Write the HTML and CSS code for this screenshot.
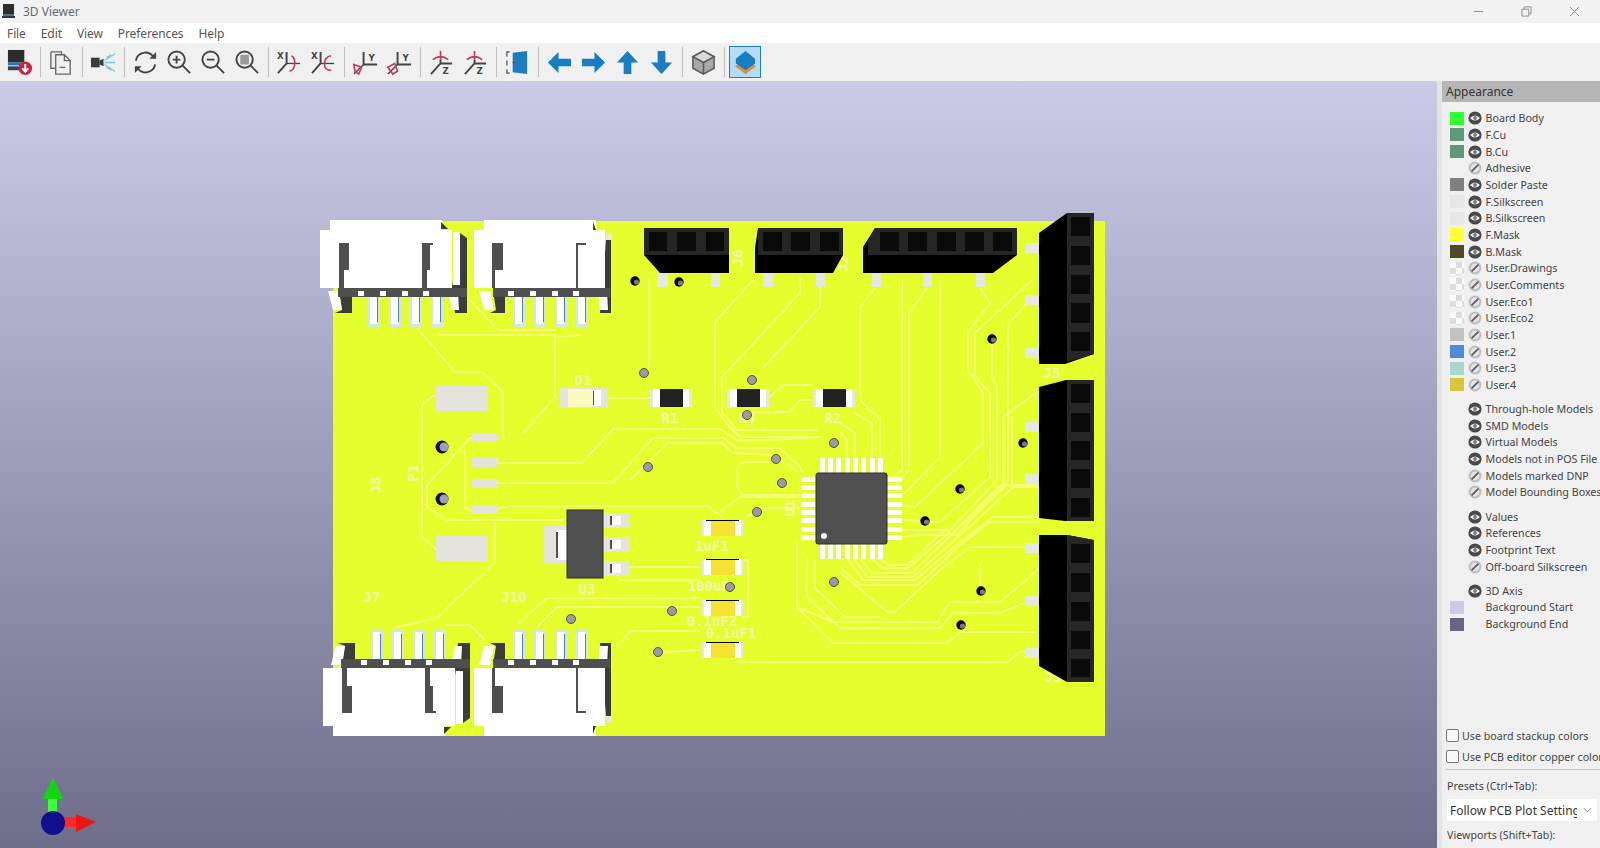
FILE: index.html
```html
<!DOCTYPE html>
<html lang="en">
<head>
<meta charset="utf-8">
<title>3D Viewer</title>
<link rel="stylesheet" href="styles.css">
</head>
<body>
<svg class="sprites" width="0" height="0" aria-hidden="true">
  <defs>
    <symbol id="eye" viewBox="0 0 14 14"><circle cx="7" cy="7" r="6.6" fill="#4a4a4a"/><path d="M2 7q5-5 10 0q-5 5-10 0z" fill="#f2f2f2"/><circle cx="7" cy="7" r="1.9" fill="#777"/></symbol>
    <symbol id="off" viewBox="0 0 14 14"><circle cx="7" cy="7" r="6.4" fill="#bdbdbd"/><circle cx="7" cy="7" r="4.4" fill="#e4e4e4"/><path d="M3.6 10.4L10.4 3.6" stroke="#5a5a5a" stroke-width="1.7"/></symbol>
  </defs>
</svg>

<header class="titlebar">
  <svg class="appicon" viewBox="0 0 14 16"><rect x="1" y="0" width="11" height="10" fill="#2d2d2d"/><rect x="1" y="10" width="11" height="2" fill="#5a6f86"/><rect x="0" y="12" width="13" height="2" fill="#2a3a4c"/></svg>
  <span class="title">3D Viewer</span>
  <div class="winctl">
    <svg viewBox="0 0 12 12"><path d="M1 6h10" class="ctl"/></svg>
    <svg viewBox="0 0 12 12"><path d="M1 3.5h7.5v7.5h-7.5zM3.5 3.5v-2.5h7.5v7.5h-2.5" class="ctl"/></svg>
    <svg viewBox="0 0 12 12"><path d="M1 1l10 10M11 1l-10 10" class="ctl"/></svg>
  </div>
</header>

<nav class="menubar"><span>File</span><span>Edit</span><span>View</span><span>Preferences</span><span>Help</span></nav>

<div class="toolbar">
  <span class="tool"><svg viewBox="0 0 28 28"><rect x="2" y="1" width="17" height="13" fill="#2c2c2c"/><rect x="2" y="14" width="17" height="3" fill="#1f79b8"/><rect x="2" y="18" width="17" height="4" fill="#33414f"/><circle cx="20" cy="20" r="7" fill="#c8213f"/><path d="M20 15.500v8M16.800 20l3.200 3.600l3.200-3.600" class="wline"/></svg></span>
  <i class="sep"></i>
  <span class="tool"><svg viewBox="0 0 28 28"><path d="M3 3h11v3M8 6h9l6 6v14h-15zM3 3v17h5M17 6v6h6M12 19h6" class="gline"/></svg></span>
  <i class="sep"></i>
  <span class="tool"><svg viewBox="0 0 28 28"><rect x="1" y="9" width="9" height="10" fill="#3b3b3b"/><path d="M10 12l4-2v8l-4-2z" fill="#3b3b3b"/><path d="M15 12l11-7M15 14h11M15 16l11 7M17 9l5-3M17 19l5 3" class="bline"/></svg></span>
  <i class="sep"></i>
  <span class="tool"><svg viewBox="0 0 28 28"><path d="M4 12a10 10 0 0 1 18-4M24 16a10 10 0 0 1-18 4" class="dline"/><path d="M25 3v7h-7zM3 25v-7h7z" fill="#444"/></svg></span>
  <span class="tool"><svg viewBox="0 0 28 28"><circle cx="11" cy="11" r="8.500" class="dline"/><path d="M17 17l8 8M7 11h8M11 7v8" class="dline"/></svg></span>
  <span class="tool"><svg viewBox="0 0 28 28"><circle cx="11" cy="11" r="8.500" class="dline"/><path d="M17 17l8 8M7 11h8" class="dline"/></svg></span>
  <span class="tool"><svg viewBox="0 0 28 28"><circle cx="11" cy="11" r="8.500" class="dline"/><path d="M17 17l8 8" class="dline"/><rect x="6.500" y="6" width="9" height="10" rx="1" fill="#9a9a9a"/></svg></span>
  <i class="sep"></i>
  <span class="tool"><svg viewBox="0 0 28 28"><path d="M11 3v12L2 25" class="dline"/><path d="M11 15l14 0" class="dline thin"/><path d="M16 7q5 3 3 11q-1 4-5 5" class="rline"/><text x="1" y="10" class="axis">X</text></svg></span>
  <span class="tool"><svg viewBox="0 0 28 28"><path d="M11 3v12L2 25" class="dline"/><path d="M11 15l14 0" class="dline thin"/><path d="M22 7q-7 1-7 9q0 6 7 6" class="rline"/><text x="1" y="10" class="axis">X</text></svg></span>
  <i class="sep"></i>
  <span class="tool"><svg viewBox="0 0 28 28"><path d="M12 3v13h14" class="dline"/><path d="M12 16L2 26" class="dline thin"/><path d="M2 16l8 3l-3 7l-4-3z" class="rline"/><text x="17" y="12" class="axis">Y</text></svg></span>
  <span class="tool"><svg viewBox="0 0 28 28"><path d="M12 3v13h14" class="dline"/><path d="M12 16L2 26" class="dline thin"/><path d="M9 15l-7 4l5 7l5-3z" class="rline"/><text x="17" y="12" class="axis">Y</text></svg></span>
  <i class="sep"></i>
  <span class="tool"><svg viewBox="0 0 28 28"><path d="M13 11v4H25M13 15L3 26" class="dline"/><path d="M13 2v9M5 11q8-6 16 0" class="rline"/><text x="15" y="26" class="axis">Z</text></svg></span>
  <span class="tool"><svg viewBox="0 0 28 28"><path d="M13 11v4H25M13 15L3 26" class="dline"/><path d="M13 2v9M21 11q-8-6-16 0" class="rline"/><text x="15" y="26" class="axis">Z</text></svg></span>
  <i class="sep"></i>
  <span class="tool"><svg viewBox="0 0 28 28"><path d="M9 4l15-2v24l-15-2z" fill="#1a7dc2"/><path d="M6 3h-3v5M3 12v5M3 21v4h3M9 14h3" class="dash"/></svg></span>
  <i class="sep"></i>
  <span class="tool"><svg viewBox="0 0 28 28"><path d="M2 14L13 3v7h13v8H13v7z" class="blue"/></svg></span>
  <span class="tool"><svg viewBox="0 0 28 28"><path d="M26 14L15 3v7H2v8h13v7z" class="blue"/></svg></span>
  <span class="tool"><svg viewBox="0 0 28 28"><path d="M14 2L3 14h7v12h8V14h7z" class="blue"/></svg></span>
  <span class="tool"><svg viewBox="0 0 28 28"><path d="M14 26L3 14h7V2h8v12h7z" class="blue"/></svg></span>
  <i class="sep"></i>
  <span class="tool"><svg viewBox="0 0 28 28"><path d="M14 2l11 6v12l-11 6l-11-6V8z" fill="#a9a9a9" stroke="#5a5a5a" stroke-width="1.600"/><path d="M14 2l11 6l-11 6l-11-6z" fill="#d8d8d8" stroke="#5a5a5a" stroke-width="1.600"/><path d="M14 14v12" stroke="#5a5a5a" stroke-width="1.600"/></svg></span>
  <i class="sep"></i>
  <span class="tool active"><svg viewBox="0 0 28 28"><path d="M14 11l11 7l-11 8l-11-8z" fill="#d8923a"/><path d="M14 2l10 8v5l-10 7l-10-7v-5z" fill="#1a7dc2"/></svg></span>
</div>

<main class="main">
  <div class="viewport">
    <svg class="scene" width="1437" height="767" viewBox="0 81 1437 767">
      <defs>
        <g id="pin"><rect x="0" y="297" width="12" height="30" class="pinframe"/><rect x="2" y="297" width="7" height="27" class="wh"/><rect x="9" y="297" width="1" height="25" class="pinedge"/></g>
        <g id="conA">
          <path d="M339 291L352 297V313H335L342 310z" class="sh"/>
          <path d="M460 233L467 238V313H455L452 287z" class="sh"/>
          <path d="M328 291H339L342 310H333z" class="wh"/>
          <path d="M448 291H458L459 310H452z" class="wh"/>
          <use href="#pin" x="368"/><use href="#pin" x="389"/><use href="#pin" x="410"/><use href="#pin" x="431"/>
          <rect x="338" y="288" width="129" height="9" class="dk"/>
          <rect x="358" y="291" width="6" height="5" class="wh"/><rect x="380" y="291" width="6" height="5" class="wh"/><rect x="402" y="291" width="6" height="5" class="wh"/><rect x="423" y="291" width="6" height="5" class="wh"/>
          <rect x="320" y="230" width="132" height="58" class="wh"/>
          <rect x="330" y="220" width="112" height="10" class="wh"/>
          <path d="M441 222L448 229H441z" class="sh"/>
          <rect x="453" y="232" width="7" height="53" class="wh"/>
          <path d="M339 243H349V270H344V288H339z" class="dk"/>
          <path d="M422 243H433V245H430V270H427V288H422z" class="dk"/>
        </g>
        <g id="conB">
          <use href="#pin" x="513"/><use href="#pin" x="534"/><use href="#pin" x="555"/><use href="#pin" x="576"/>
          <path d="M607 233H612V313H600L598 288z" class="pale"/>
          <path d="M606 240H611V313H600z" class="sh"/>
          <path d="M493 291L505 297V313H490L496 310z" class="sh"/>
          <path d="M479 291H490L494 310H484z" class="wh"/>
          <path d="M598 291H607L608 310H600z" class="wh"/>
          <rect x="493" y="288" width="117" height="9" class="dk"/>
          <rect x="508" y="291" width="6" height="5" class="wh"/><rect x="530" y="291" width="6" height="5" class="wh"/><rect x="552" y="291" width="6" height="5" class="wh"/><rect x="573" y="291" width="6" height="5" class="wh"/>
          <rect x="474" y="230" width="131" height="58" class="wh"/>
          <rect x="484" y="220" width="112" height="10" class="wh"/>
          <path d="M593 222L596 230H593z" class="sh"/>
          <path d="M492 243H503V270H495V288H492z" class="dk"/>
          <path d="M576 243H586V245H578V288H576z" class="dk"/>
        </g>
        <g id="smd"><rect x="0" y="0" width="41" height="16" class="wh"/><rect x="0" y="0" width="2" height="16" class="pale"/><rect x="39" y="0" width="2" height="16" class="pale"/><rect x="9" y="0" width="24" height="16" class="cap"/><rect x="4" y="0" width="33" height="1" class="blk"/></g>
        <g id="res"><rect x="0" y="0" width="42" height="18" class="wh"/><rect x="0" y="0" width="3" height="18" class="pale"/><rect x="39" y="0" width="3" height="18" class="pale"/><rect x="10" y="0" width="23" height="18" class="ink"/></g>
        <circle id="via" r="4.500"/>
        <g id="viad"><circle r="4.700" class="blk"/><circle cx="1.500" cy="1" r="2.600" class="viaglint"/></g>
      </defs>

      <rect x="333" y="221" width="772" height="515" class="board"/>

      <g class="tr">
        <path d="M649 278V367"/>
        <path d="M417 328L455 372H482L503 392V440"/>
        <path d="M437 335H555V397L523 433"/>
        <path d="M470 300L498 330H555M580 335L557 337"/>
        <path d="M608 398H650"/>
        <path d="M497 463H582L613 429H720L737 440H770L820 437"/>
        <path d="M497 483H613L653 438H723L737 448H780L800 467L803 473"/>
        <path d="M630 480L668 443H722L733 453L773 455L797 472"/>
        <path d="M497 509L510 506H707L722 517"/>
        <path d="M472 438H470L427 485V507L447 520H563"/>
        <path d="M465 450V508L472 510"/>
        <path d="M422 430V537L437 550"/>
        <path d="M422 430V405L433 396H436"/>
        <path d="M495 522V562L437 618L397 627"/>
        <path d="M445 625H470L485 640"/>
        <path d="M519 623L547 598H700"/>
        <path d="M537 627L557 607H700"/>
        <path d="M617 647L630 631H700"/>
        <path d="M627 567H700M618 580H700M663 652L700 650"/>
        <path d="M753 280L715 322V408L728 425L740 437H820"/>
        <path d="M800 278V293L722 377V412L737 430H817"/>
        <path d="M820 287V307L763 368"/>
        <path d="M770 397L783 385H813"/>
        <path d="M750 412H790L800 400H813"/>
        <path d="M743 462L737 468V487L743 495H800"/>
        <path d="M743 462H770"/>
        <path d="M720 512L740 497H800"/>
        <path d="M747 517L760 508H800"/>
        <path d="M742 560H748V617H743"/>

        <path d="M875 288L860 307V400L880 420V457"/>
        <path d="M853 412L872 423V457"/>
        <path d="M840 423L855 433V457"/>
        <path d="M840 432L847 440V457"/>
        <path d="M902 280V470L890 480"/>
        <path d="M927 288L909 313V470L895 487"/>
        <path d="M940 280V457L908 490L898 497"/>
        <path d="M980 288L990 303L968 332V370L983 393V443L915 507L900 505"/>
        <path d="M1032 280L975 333V377L990 393V477L940 522L903 520"/>
        <path d="M992 345V377L997 387V480L950 530H902"/>
        <path d="M1025 305L1008 325V480L957 535H920L903 537"/>
        <path d="M1037 392L1003 417V483L953 533"/>
        <path d="M1012 417V490"/>

        <path d="M860 558L872 573H912L953 533L1007 485H1038"/>
        <path d="M853 558L868 577H913L957 538L1013 487H1040"/>
        <path d="M847 558L863 580H915L960 542L993 517H1037"/>
        <path d="M878 558L890 565H907L947 528"/>
        <path d="M870 558L883 568H908L950 532"/>
        <path d="M840 567L860 585H918L960 545L990 522H1040"/>
        <path d="M840 572L887 612H895L940 570L970 547H1027"/>
        <path d="M980 563V587"/>
        <path d="M797 543V607L833 622H937L950 602H1000L1040 568"/>
        <path d="M807 557V597L840 628H940L953 613H1000L1037 597"/>
        <path d="M815 560V588L845 617H880"/>
        <path d="M797 607L833 643H947L960 632H1037"/>
        <path d="M733 662H1007L1020 652H1037"/>
      </g>

      <g class="silk">
        <text transform="translate(743 258) rotate(-90)" text-anchor="middle">J6</text>
        <text transform="translate(848 264) rotate(-90)" text-anchor="middle">J2</text>
        <text x="1052" y="378" text-anchor="middle">J5</text>
        <text x="1053" y="682" text-anchor="middle">J3</text>
      </g>

      <use href="#conA"/>
      <use href="#conB"/>
      <use href="#conA" transform="matrix(1 0 0 -1 3 956)"/>
      <use href="#conB" transform="matrix(1 0 0 -1 0 956)"/>

      <g class="pale">
        <rect x="711" y="273" width="9" height="14"/><rect x="657" y="273" width="11" height="14"/>
        <rect x="763" y="273" width="10" height="14"/><rect x="816" y="273" width="9" height="14"/>
        <rect x="872" y="273" width="9" height="14"/><rect x="923" y="273" width="9" height="14"/><rect x="976" y="273" width="9" height="14"/>
        <rect x="1025" y="243" width="14" height="10"/><rect x="1025" y="295" width="14" height="10"/><rect x="1025" y="348" width="14" height="10"/>
        <rect x="1025" y="422" width="14" height="10"/><rect x="1025" y="474" width="14" height="10"/>
        <rect x="1025" y="543" width="14" height="10"/><rect x="1025" y="596" width="14" height="10"/><rect x="1025" y="648" width="14" height="10"/>
      </g>

      <path d="M644 228H729V273H660L644 255z" class="blk"/>
      <rect x="644" y="228" width="85" height="27" class="hdr"/>
      <rect x="649" y="232" width="18" height="19" class="sq"/><rect x="677" y="232" width="19" height="19" class="sq"/><rect x="706" y="232" width="18" height="19" class="sq"/>

      <path d="M758 228H843V255L833 273H755V248z" class="blk"/>
      <rect x="758" y="228" width="85" height="27" class="hdr"/>
      <rect x="763" y="232" width="19" height="19" class="sq"/><rect x="791" y="232" width="19" height="19" class="sq"/><rect x="820" y="232" width="19" height="19" class="sq"/>

      <path d="M875 228H1017V255L993 273H863V247z" class="blk"/>
      <path d="M875 228H1017V255H868V240z" class="hdr"/>
      <rect x="880" y="232" width="19" height="19" class="sq"/><rect x="908" y="232" width="19" height="19" class="sq"/><rect x="937" y="232" width="19" height="19" class="sq"/><rect x="965" y="232" width="19" height="19" class="sq"/><rect x="993" y="232" width="19" height="19" class="sq"/>

      <path d="M1039 233L1067 213H1094V354L1065 364H1039z" class="blk"/>
      <path d="M1067 213H1094V354L1067 362z" class="hdr"/>
      <rect x="1071" y="217" width="19" height="19" class="sq"/><rect x="1071" y="246" width="19" height="19" class="sq"/><rect x="1071" y="275" width="19" height="19" class="sq"/><rect x="1071" y="303" width="19" height="20" class="sq"/><rect x="1071" y="332" width="19" height="19" class="sq"/>

      <path d="M1039 387L1066 380H1094V521H1065L1039 518z" class="blk"/>
      <rect x="1067" y="380" width="27" height="141" class="hdr"/>
      <rect x="1071" y="384" width="19" height="19" class="sq"/><rect x="1071" y="413" width="19" height="19" class="sq"/><rect x="1071" y="441" width="19" height="19" class="sq"/><rect x="1071" y="469" width="19" height="19" class="sq"/><rect x="1071" y="498" width="19" height="19" class="sq"/>

      <path d="M1039 535H1067L1094 540V682H1067L1039 666z" class="blk"/>
      <path d="M1067 535L1094 540V682H1067z" class="hdr"/>
      <rect x="1071" y="544" width="19" height="19" class="sq"/><rect x="1071" y="573" width="19" height="19" class="sq"/><rect x="1071" y="602" width="19" height="19" class="sq"/><rect x="1071" y="631" width="19" height="18" class="sq"/><rect x="1071" y="659" width="19" height="18" class="sq"/>

      <rect x="436" y="386" width="52" height="25" class="silkpad"/>
      <rect x="436" y="536" width="52" height="25" class="silkpad"/>
      <rect x="472" y="433" width="25" height="9" class="silkpad"/><rect x="472" y="458" width="25" height="9" class="silkpad"/><rect x="472" y="479" width="25" height="9" class="silkpad"/><rect x="472" y="505" width="25" height="9" class="silkpad"/>

      <rect x="560" y="388" width="48" height="20" class="silkpad"/>
      <rect x="568" y="389" width="25" height="18" class="led"/>
      <rect x="593" y="390" width="8" height="16" class="wh"/>
      <rect x="593" y="391" width="1" height="14" class="dk"/>
      <use href="#res" x="650" y="389"/>
      <use href="#res" x="727" y="389"/>
      <use href="#res" x="813" y="389"/>

      <rect x="544" y="525" width="23" height="38" class="silkpad"/>
      <rect x="557" y="530" width="10" height="30" class="wh"/>
      <rect x="556" y="532" width="2" height="26" class="dk"/>
      <rect x="603" y="513" width="26" height="15" class="silkpad"/><rect x="603" y="537" width="26" height="15" class="silkpad"/><rect x="603" y="561" width="26" height="15" class="silkpad"/>
      <rect x="610" y="516" width="11" height="9" class="wh"/><rect x="610" y="540" width="11" height="9" class="wh"/><rect x="610" y="564" width="11" height="9" class="wh"/>
      <rect x="610" y="516" width="2" height="9" class="dk"/><rect x="610" y="540" width="2" height="9" class="dk"/><rect x="610" y="564" width="2" height="9" class="dk"/>
      <rect x="567" y="510" width="36" height="68" class="ic"/>

      <use href="#smd" x="702" y="520"/>
      <use href="#smd" x="702" y="559"/>
      <use href="#smd" x="702" y="600"/>
      <use href="#smd" x="702" y="642"/>

      <g class="wh">
        <rect x="820" y="458" width="5" height="15"/><rect x="828" y="458" width="5" height="15"/><rect x="836" y="458" width="5" height="15"/><rect x="845" y="458" width="5" height="15"/><rect x="853" y="458" width="5" height="15"/><rect x="861" y="458" width="5" height="15"/><rect x="870" y="458" width="5" height="15"/><rect x="878" y="458" width="5" height="15"/>
        <rect x="820" y="544" width="5" height="15"/><rect x="828" y="544" width="5" height="15"/><rect x="836" y="544" width="5" height="15"/><rect x="845" y="544" width="5" height="15"/><rect x="853" y="544" width="5" height="15"/><rect x="861" y="544" width="5" height="15"/><rect x="870" y="544" width="5" height="15"/><rect x="878" y="544" width="5" height="15"/>
        <rect x="801" y="477" width="15" height="5"/><rect x="801" y="485" width="15" height="5"/><rect x="801" y="493" width="15" height="5"/><rect x="801" y="502" width="15" height="5"/><rect x="801" y="510" width="15" height="5"/><rect x="801" y="518" width="15" height="5"/><rect x="801" y="527" width="15" height="5"/><rect x="801" y="535" width="15" height="5"/>
        <rect x="887" y="477" width="15" height="5"/><rect x="887" y="485" width="15" height="5"/><rect x="887" y="493" width="15" height="5"/><rect x="887" y="502" width="15" height="5"/><rect x="887" y="510" width="15" height="5"/><rect x="887" y="518" width="15" height="5"/><rect x="887" y="527" width="15" height="5"/><rect x="887" y="535" width="15" height="5"/>
      </g>
      <rect x="816" y="473" width="71" height="71" rx="2" class="ic"/>
      <circle cx="824" cy="536" r="3" class="wh"/>

      <g class="hole"><circle cx="442" cy="447" r="6.500"/><circle cx="442" cy="499" r="6.500"/></g>
      <g class="holefill"><circle cx="444" cy="447" r="4.500"/><circle cx="444" cy="499" r="4.500"/></g>

      <g class="silk">
        <text x="583" y="385" text-anchor="middle">D1</text>
        <text x="670" y="423" text-anchor="middle">R1</text>
        <text x="747" y="423" text-anchor="middle">R3</text>
        <text x="833" y="423" text-anchor="middle">R2</text>
        <text x="587" y="594" text-anchor="middle">U3</text>
        <text x="372" y="602" text-anchor="middle">J7</text>
        <text x="514" y="602" text-anchor="middle">J10</text>
        <text x="712" y="551" text-anchor="middle">1uF1</text>
        <text x="709" y="591" text-anchor="middle">100uF</text>
        <text x="712" y="626" text-anchor="middle">0.1uF2</text>
        <text x="731" y="638" text-anchor="middle">0.1uF1</text>
        <text transform="translate(381 485) rotate(-90)" text-anchor="middle">J8</text>
        <text transform="translate(418 473) rotate(-90)" text-anchor="middle">P1</text>
        <text transform="translate(795 508) rotate(-90)" text-anchor="middle">U1</text>
      </g>

      <g class="via">
        <use href="#via" x="644" y="373"/><use href="#via" x="752" y="380"/><use href="#via" x="747" y="415"/><use href="#via" x="834" y="443"/>
        <use href="#via" x="776" y="459"/><use href="#via" x="782" y="483"/><use href="#via" x="757" y="512"/><use href="#via" x="834" y="582"/>
        <use href="#via" x="648" y="467"/><use href="#via" x="571" y="619"/><use href="#via" x="672" y="611"/><use href="#via" x="658" y="652"/><use href="#via" x="730" y="587"/>
      </g>
      <use href="#viad" x="635" y="281"/><use href="#viad" x="679" y="282"/><use href="#viad" x="992" y="339"/><use href="#viad" x="1023" y="443"/>
      <use href="#viad" x="960" y="489"/><use href="#viad" x="925" y="521"/><use href="#viad" x="981" y="591"/><use href="#viad" x="961" y="625"/>

      <path d="M48 797H57V812H48z" class="axg2"/>
      <path d="M53 777L43 799H63z" class="axg"/>
      <rect x="63" y="817" width="14" height="10" class="axr2"/>
      <path d="M76 814L96 822L76 832z" class="axr"/>
      <circle cx="53" cy="823" r="12" class="axb"/>
    </svg>
  </div>
  <div class="sash"></div>

  <aside class="panel">
    <div class="panelhead">Appearance</div>
    <div class="layers">
      <div class="row"><i class="sw board-body"></i><svg class="vis"><use href="#eye"/></svg><span>Board Body</span></div>
      <div class="row"><i class="sw cu"></i><svg class="vis"><use href="#eye"/></svg><span>F.Cu</span></div>
      <div class="row"><i class="sw cu"></i><svg class="vis"><use href="#eye"/></svg><span>B.Cu</span></div>
      <div class="row"><i class="sw"></i><svg class="vis"><use href="#off"/></svg><span>Adhesive</span></div>
      <div class="row"><i class="sw paste"></i><svg class="vis"><use href="#eye"/></svg><span>Solder Paste</span></div>
      <div class="row"><i class="sw silkc"></i><svg class="vis"><use href="#eye"/></svg><span>F.Silkscreen</span></div>
      <div class="row"><i class="sw silkc"></i><svg class="vis"><use href="#eye"/></svg><span>B.Silkscreen</span></div>
      <div class="row"><i class="sw fmask"></i><svg class="vis"><use href="#eye"/></svg><span>F.Mask</span></div>
      <div class="row"><i class="sw bmask"></i><svg class="vis"><use href="#eye"/></svg><span>B.Mask</span></div>
      <div class="row"><i class="sw check"></i><svg class="vis"><use href="#off"/></svg><span>User.Drawings</span></div>
      <div class="row"><i class="sw check"></i><svg class="vis"><use href="#off"/></svg><span>User.Comments</span></div>
      <div class="row"><i class="sw check"></i><svg class="vis"><use href="#off"/></svg><span>User.Eco1</span></div>
      <div class="row"><i class="sw check"></i><svg class="vis"><use href="#off"/></svg><span>User.Eco2</span></div>
      <div class="row"><i class="sw u1"></i><svg class="vis"><use href="#off"/></svg><span>User.1</span></div>
      <div class="row"><i class="sw u2"></i><svg class="vis"><use href="#off"/></svg><span>User.2</span></div>
      <div class="row"><i class="sw u3"></i><svg class="vis"><use href="#off"/></svg><span>User.3</span></div>
      <div class="row"><i class="sw u4"></i><svg class="vis"><use href="#off"/></svg><span>User.4</span></div>
    </div>
    <div class="layers group">
      <div class="row"><i class="sw"></i><svg class="vis"><use href="#eye"/></svg><span>Through-hole Models</span></div>
      <div class="row"><i class="sw"></i><svg class="vis"><use href="#eye"/></svg><span>SMD Models</span></div>
      <div class="row"><i class="sw"></i><svg class="vis"><use href="#eye"/></svg><span>Virtual Models</span></div>
      <div class="row"><i class="sw"></i><svg class="vis"><use href="#eye"/></svg><span>Models not in POS File</span></div>
      <div class="row"><i class="sw"></i><svg class="vis"><use href="#off"/></svg><span>Models marked DNP</span></div>
      <div class="row"><i class="sw"></i><svg class="vis"><use href="#off"/></svg><span>Model Bounding Boxes</span></div>
    </div>
    <div class="layers group">
      <div class="row"><i class="sw"></i><svg class="vis"><use href="#eye"/></svg><span>Values</span></div>
      <div class="row"><i class="sw"></i><svg class="vis"><use href="#eye"/></svg><span>References</span></div>
      <div class="row"><i class="sw"></i><svg class="vis"><use href="#eye"/></svg><span>Footprint Text</span></div>
      <div class="row"><i class="sw"></i><svg class="vis"><use href="#off"/></svg><span>Off-board Silkscreen</span></div>
    </div>
    <div class="layers group">
      <div class="row"><i class="sw"></i><svg class="vis"><use href="#eye"/></svg><span>3D Axis</span></div>
      <div class="row"><i class="sw bgs"></i><svg class="vis"></svg><span>Background Start</span></div>
      <div class="row"><i class="sw bge"></i><svg class="vis"></svg><span>Background End</span></div>
    </div>

    <div class="options">
      <label class="opt"><i class="box"></i><span>Use board stackup colors</span></label>
      <label class="opt"><i class="box"></i><span>Use PCB editor copper colors</span></label>
    </div>
    <hr class="rule">
    <div class="caption">Presets (Ctrl+Tab):</div>
    <div class="select"><span>Follow PCB Plot Settings</span><svg viewBox="0 0 10 6"><path d="M1 1l4 4l4-4" class="chev"/></svg></div>
    <div class="caption second">Viewports (Shift+Tab):</div>
  </aside>
</main>
</body>
</html>
```

FILE: styles.css
```css
* { box-sizing: border-box; }
html, body { margin: 0; height: 100%; overflow: hidden; }
body { display: flex; flex-direction: column; font-family: "Noto Sans", "Open Sans", sans-serif; background: #f0f0f0; color: #444; }
.sprites { position: absolute; }

.titlebar { height: 23px; background: #f2f2f2; display: flex; align-items: center; padding-left: 2px; }
.appicon { width: 14px; height: 16px; flex: none; }
.title { margin-left: 7px; font-size: 12px; color: #6a6a6a; }
.winctl { margin-left: auto; display: flex; gap: 37px; padding-right: 20px; }
.winctl svg { width: 11px; height: 11px; }
.ctl { fill: none; stroke: #8a8a8a; stroke-width: 1; }

.menubar { height: 20px; background: #fff; display: flex; align-items: center; padding-left: 7px; gap: 15px; font-size: 12px; letter-spacing: -0.1px; color: #555; }

.toolbar { height: 38px; background: #f0f0f0; display: flex; align-items: center; padding-left: 2px; }
.tool { width: 34px; height: 32px; display: flex; align-items: center; justify-content: center; flex: none; }
.tool svg { width: 27px; height: 27px; }
.tool.active { width: 32px; margin: 0 1px; background: #b5dcf7; border: 1px solid #1f7fc4; }
.sep { width: 8px; height: 30px; flex: none; display: block; background: linear-gradient(#bdbdbd, #bdbdbd) center / 1px 100% no-repeat; }
.wline { fill: none; stroke: #fff; stroke-width: 2; }
.gline { fill: none; stroke: #666; stroke-width: 1.4; }
.bline { fill: none; stroke: #7cc5e2; stroke-width: 1.3; }
.dline { fill: none; stroke: #444; stroke-width: 2; }
.dline.thin { stroke-width: 1.4; }
.rline { fill: none; stroke: #c23a5a; stroke-width: 1.700; }
.dash { fill: none; stroke: #555; stroke-width: 1.300; }
.blue { fill: #1a7dc2; }
.axis { font: 700 9px "DejaVu Sans", sans-serif; fill: #444; }

.main { flex: 1; display: flex; min-height: 0; }
.viewport { width: 1437px; flex: none; background: linear-gradient(#cbcbe8, #6e6e8a); overflow: hidden; }
.scene { display: block; }
.sash { width: 5px; flex: none; background: #e4e4e4; }

.board { fill: #e5ff2e; }
.tr { fill: none; stroke: #f6ff74; stroke-width: 1.900; }
.wh { fill: #fff; }
.dk { fill: #4f4f4f; }
.sh { fill: #3c3c3c; }
.blk { fill: #000; }
.sq { fill: #0a0a0a; }
.ink { fill: #222; }
.hdr { fill: #262626; }
.ic { fill: #505050; stroke: #2a2a2a; stroke-width: 1; }
.pale { fill: #e6e8de; }
.pinframe { fill: #d2e6e2; }
.pinedge { fill: #5a7fc0; }
.cap { fill: #f7e233; }
.led { fill: #fdfac0; }
.silkpad { fill: #e4e4dc; }
.hole { fill: #111; }
.holefill { fill: #9c9cc0; }
.via { fill: #9a9aa8; stroke: #55552a; stroke-width: 1; }
.viaglint { fill: #77778f; }
.silk { font: 700 14px "DejaVu Sans Mono", monospace; fill: #f3f6ac; }
.axg { fill: #12d612; }
.axg2 { fill: #3bff3b; }
.axr { fill: #f01414; }
.axr2 { fill: #ff2a2a; }
.axb { fill: #10108c; }

.panel { flex: 1; min-width: 0; overflow: hidden; background: #f0f0f0; font-size: 10.700px; color: #444; }
.panelhead { height: 21px; background: #b6b6b6; color: #333; font-size: 12px; line-height: 21px; padding-left: 4px; white-space: nowrap; }
.layers { padding-top: 8px; }
.layers.group { padding-top: 7.600px; }
.row { height: 16.670px; display: flex; align-items: center; white-space: nowrap; padding-left: 7.500px; }
.sw { display: block; width: 14px; height: 13px; flex: none; }
.vis { width: 14px; height: 14px; margin-left: 4.500px; flex: none; }
.row span { margin-left: 3.500px; }
.board-body { background: #2eff2e; }
.cu { background: #5f9a78; }
.paste { background: #808080; }
.silkc { background: #e7e7e7; }
.fmask { background: #ffff33; }
.bmask { background: #4e4a28; }
.check { background: repeating-conic-gradient(#dcdcdc 0 25%, #fafafa 0 50%) 0 0 / 12px 12px; }
.u1 { background: #c2c2c2; }
.u2 { background: #4f8ae0; }
.u3 { background: #a5d8cc; }
.u4 { background: #ddc53a; }
.bgs { background: #ccccE6; }
.bge { background: #666680; }

.options { margin-top: 93px; padding-left: 4px; }
.opt { height: 21px; display: flex; align-items: center; white-space: nowrap; }
.box { display: block; width: 13px; height: 13px; flex: none; background: #f8f8f8; border: 1px solid #777; border-radius: 2px; margin-right: 3px; }
.rule { margin: 2px 0 0 4px; border: 0; border-top: 1px solid #c6c6c6; }
.caption { margin: 8px 0 0 5px; white-space: nowrap; line-height: 16px; }
.caption.second { margin-top: 6px; }
.select { margin: 5px 3px 0 5px; height: 22px; background: #fff; display: flex; align-items: center; justify-content: space-between; padding: 0 5px 0 3px; font-size: 12px; overflow: hidden; color: #333; }
.select span { width: 127px; overflow: hidden; white-space: nowrap; }
.select svg { width: 9px; height: 6px; flex: none; }
.chev { fill: none; stroke: #777; stroke-width: 1; }
```
